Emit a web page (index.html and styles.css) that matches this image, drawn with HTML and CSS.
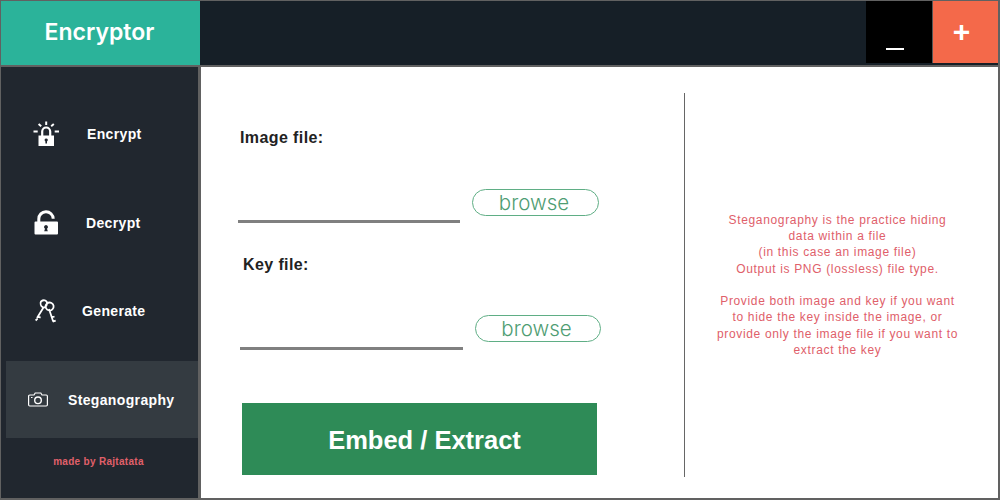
FILE: index.html
```html
<!DOCTYPE html>
<html lang="en">
<head>
<meta charset="utf-8">
<title>Encryptor</title>
<link rel="stylesheet" href="styles.css">
</head>
<body>
<div class="app">
  <header class="topbar">
    <div class="brand">Encryptor</div>
    <div class="spacer"></div>
    <div class="win-btn win-min"><span class="min-bar"></span></div>
    <div class="win-btn win-close"><span class="plus">+</span></div>
  </header>
  <div class="body">
    <aside class="sidebar">
      <nav class="nav">
        <div class="nav-item">
          <svg class="icon" viewBox="0 0 26 26"><path d="M9.200 15V10.500a4 4 0 0 1 8 0V15" fill="none" stroke="#fff" stroke-width="2.200"/><path fill-rule="evenodd" d="M5.500 14.500h15.500v10.500H5.500zM13.200 17.400a1.600 1.600 0 0 0-.8 3v2h1.600v-2a1.600 1.600 0 0 0-.8-3z" fill="#fff"/><path d="M13.200 .5v3.600M5.600 3l2.600 2.200M20.800 3l-2.600 2.200M.5 10.500h4.200M21.700 10.500h4.300" stroke="#fff" stroke-width="2" fill="none"/></svg>
          <span class="nav-label lbl-encrypt">Encrypt</span>
        </div>
        <div class="nav-item">
          <svg class="icon" viewBox="0 0 26 26"><path d="M5.800 12.500V9a7.200 7.200 0 0 1 14.400-.2" fill="none" stroke="#fff" stroke-width="3"/><path fill-rule="evenodd" d="M2.500 11.500q-1 0-1 1v11q0 1 1 1h21.500q1 0 1-1v-11q0-1-1-1zM13 15a2 2 0 0 0-1 3.700l-.8 2.500h3.600l-.8-2.500a2 2 0 0 0-1-3.700z" fill="#fff"/></svg>
          <span class="nav-label lbl-decrypt">Decrypt</span>
        </div>
        <div class="nav-item">
          <svg class="icon" viewBox="0 0 26 26" fill="none" stroke="#fff" stroke-width="1.800"><path d="M10.500 9.500 4 20M4.800 18.500l2.800 1.200M2.600 22.500l2-1.800M8 3.500c3-2.500 6.500-1 6 2.500-.3 2.500-3 4.500-4.500 3C8 8 7 5.500 8 3.500zM18.500 5a4 4 0 1 1-5.500 5.200 4 4 0 0 1 5.500-5.200zM16 11l4.200 12.500M18.500 19.500l3-1M19.700 23.700l3-1"/></svg>
          <span class="nav-label lbl-generate">Generate</span>
        </div>
        <div class="nav-item active">
          <svg class="icon-cam" viewBox="0 0 20 15" fill="none" stroke="#fff" stroke-width="1.200"><path d="M1.800 3h4.200l1.200-2h5.600l1.200 2h4.200q1.200 0 1.200 1.200v8.600q0 1.200-1.200 1.200H1.800q-1.200 0-1.200-1.200V4.200Q.6 3 1.800 3z"/><circle cx="10" cy="8.300" r="3.300" stroke-width="1.400"/><path d="M3 5.500h1.500"/></svg>
          <span class="nav-label lbl-steg">Steganography</span>
        </div>
      </nav>
      <div class="credit">made by Rajtatata</div>
    </aside>
    <main class="main">
      <section class="form">
        <div class="field field-image">
          <div class="field-label">Image file:</div>
          <div class="field-row">
            <div class="file-line"></div>
            <button class="browse">browse</button>
          </div>
        </div>
        <div class="field field-key">
          <div class="field-label">Key file:</div>
          <div class="field-row">
            <div class="file-line"></div>
            <button class="browse">browse</button>
          </div>
        </div>
        <button class="submit">Embed / Extract</button>
      </section>
      <section class="info">
        <p class="info-text">Steganography is the practice hiding<br>data within a file<br>(in this case an image file)<br>Output is PNG (lossless) file type.<br><br>Provide both image and key if you want<br>to hide the key inside the image, or<br>provide only the image file if you want to<br>extract the key</p>
      </section>
    </main>
  </div>
</div>
</body>
</html>
```
FILE: styles.css
```css
* { box-sizing: border-box; }
html, body { margin: 0; padding: 0; }
body { width: 1000px; height: 500px; overflow: hidden; font-family: "Liberation Sans", Arial, sans-serif; }
.app {
  width: 1000px; height: 500px; background: #616161;
  padding: 1px 2px 2px 1px;
  display: flex; flex-direction: column;
}
.topbar { height: 64px; display: flex; background: #161f27; flex: none; }
.brand {
  width: 199px; background: #2bb39a; color: #fff;
  font-family: Inter, sans-serif; font-weight: 600; font-size: 23px;
  display: flex; align-items: center; justify-content: center;
  padding-bottom: 3px; padding-right: 2px;
}
.spacer { flex: 1; }
.win-btn { height: 62px; width: 66px; display: flex; align-items: center; justify-content: center; }
.win-min { background: #000; }
.win-close { background: #f4694a; border-left: 1px solid #555; }
.min-bar { width: 18px; height: 2px; background: #fff; margin-top: 34px; margin-right: 9px; }
.plus { color: #fff; font-weight: 700; font-size: 30px; line-height: 1; margin-right: 8px; }
.body { flex: 1; display: flex; gap: 3px; margin-top: 2px; min-height: 0; }
.sidebar { width: 197px; background: #21272f; display: flex; flex-direction: column; }
.nav { padding: 28.5px 0 0 5px; display: flex; flex-direction: column; gap: 11.5px; }
.nav-item { height: 77px; display: flex; align-items: center; color: #fff; position: relative; }
.nav-item.active { background: #343b41; }
.icon { width: 26px; height: 26px; margin-left: 27px; flex: none; }
.icon-cam { width: 20px; height: 15px; margin-left: 22px; flex: none; }
.nav-label { font-weight: 700; font-size: 14px; letter-spacing: .35px; white-space: nowrap; }
.lbl-encrypt { margin-left: 28px; }
.lbl-decrypt { margin-left: 27px; }
.lbl-generate { margin-left: 23px; }
.lbl-steg { margin-left: 20px; margin-top: 1px; }
.credit { margin-top: 18px; text-align: center; color: #e0606a; font-weight: 700; font-size: 10px; letter-spacing: .3px; line-height: 12px; padding-right: 2px; }
.main { flex: 1; background: #fff; display: flex; }
.form { width: 483px; padding-top: 62px; flex: none; }
.field-label { font-weight: 700; font-size: 16px; letter-spacing: .4px; line-height: 18px; color: #222; }
.field-row { display: flex; align-items: flex-start; gap: 12px; margin-top: 42px; }
.file-line { height: 34px; border-bottom: 3px solid #808080; flex: none; }
.browse {
  height: 27px; background: #fff; border: 1.5px solid #5fae85; border-radius: 14px;
  font-family: Inter, sans-serif; font-weight: 300; font-size: 20.5px; color: #4f9d73;
  padding: 0 3px 0 0; line-height: 20px;
}
.field-image { margin-left: 37px; }
.field-image .field-label { padding-left: 2px; }
.field-image .file-line { width: 222px; }
.field-image .browse { width: 127px; }
.field-key { margin-left: 39px; margin-top: 33px; }
.field-key .field-label { padding-left: 3px; }
.field-key .field-row { margin-top: 41px; }
.field-key .file-line { width: 223px; height: 35px; }
.field-key .browse { width: 126px; }
.submit {
  display: block; margin: 53px 0 0 41px; width: 355px; height: 72px;
  background: #2e8b57; border: 0; color: #fff; padding: 2px 0 0 10px;
  font-family: "Liberation Sans", Arial, sans-serif; font-weight: 700; font-size: 25.5px;
}
.info {
  flex: 1; margin: 26px 0 21px; border-left: 1.5px solid #666;
  display: flex; align-items: center; justify-content: center; padding-right: 8px;
}
.info-text { margin: 0; text-align: center; color: #e0606a; font-size: 12px; line-height: 16.25px; letter-spacing: .66px; }
```
